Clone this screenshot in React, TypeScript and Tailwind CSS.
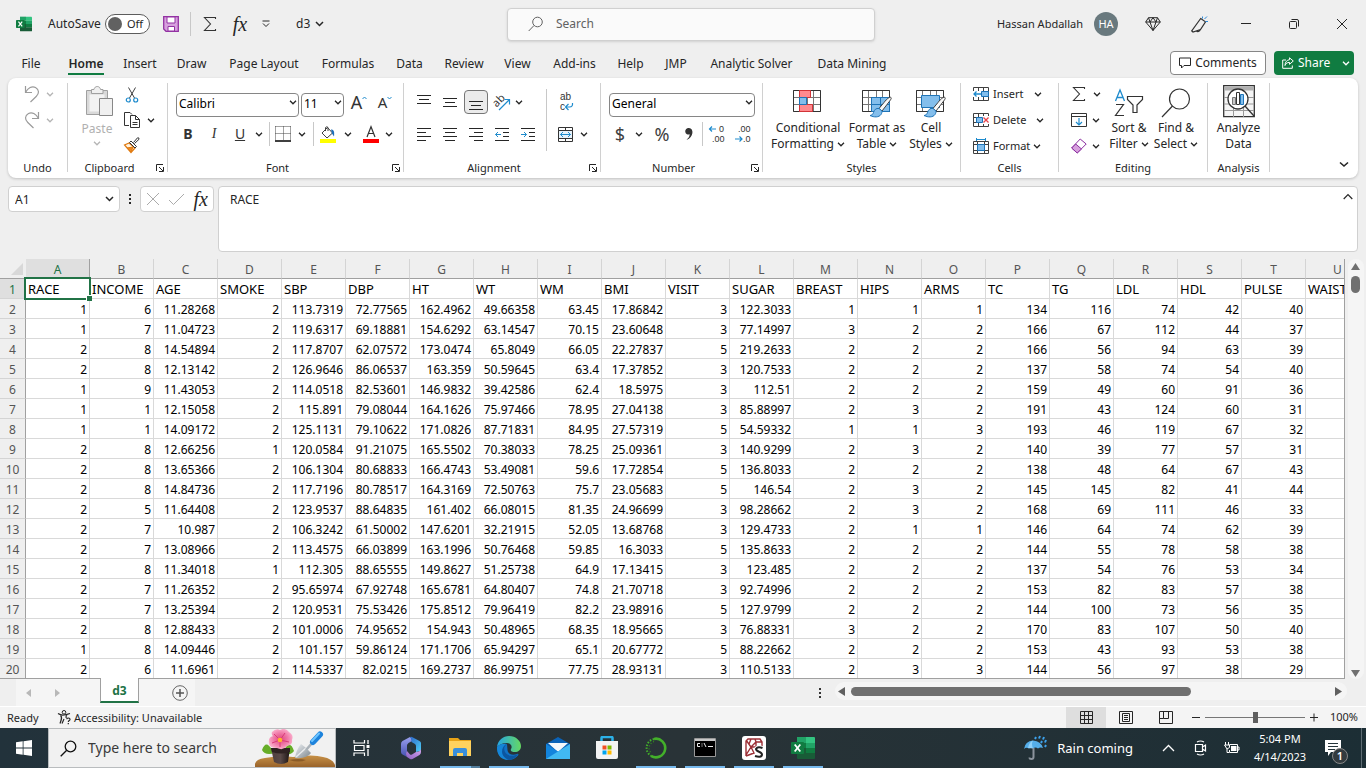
import React from "react";

type Kids = { children?: React.ReactNode };

const TABS = [
  "File", "Home", "Insert", "Draw", "Page Layout", "Formulas", "Data", "Review", "View",
  "Add-ins", "Help", "JMP", "Analytic Solver", "Data Mining",
];
const TAB_WIDTHS = [
  "w-[50px]", "w-[60px]", "w-[48px]", "w-[55px]", "w-[90px]", "w-[78px]", "w-[45px]", "w-[64px]", "w-[43px]",
  "w-[71px]", "w-[41px]", "w-[50px]", "w-[101px]", "w-[100px]",
];

const COLS = "ABCDEFGHIJKLMNOPQRSTU".split("");
const FIELDS = [
  "RACE", "INCOME", "AGE", "SMOKE", "SBP", "DBP", "HT", "WT", "WM", "BMI", "VISIT", "SUGAR",
  "BREAST", "HIPS", "ARMS", "TC", "TG", "LDL", "HDL", "PULSE", "WAIST",
];
const ROWS = `1 6 11.28268 2 113.7319 72.77565 162.4962 49.66358 63.45 17.86842 3 122.3033 1 1 1 134 116 74 42 40
1 7 11.04723 2 119.6317 69.18881 154.6292 63.14547 70.15 23.60648 3 77.14997 3 2 2 166 67 112 44 37
2 8 14.54894 2 117.8707 62.07572 173.0474 65.8049 66.05 22.27837 5 219.2633 2 2 2 166 56 94 63 39
2 8 12.13142 2 126.9646 86.06537 163.359 50.59645 63.4 17.37852 3 120.7533 2 2 2 137 58 74 54 40
1 9 11.43053 2 114.0518 82.53601 146.9832 39.42586 62.4 18.5975 3 112.51 2 2 2 159 49 60 91 36
1 1 12.15058 2 115.891 79.08044 164.1626 75.97466 78.95 27.04138 3 85.88997 2 3 2 191 43 124 60 31
1 1 14.09172 2 125.1131 79.10622 171.0826 87.71831 84.95 27.57319 5 54.59332 1 1 3 193 46 119 67 32
2 8 12.66256 1 120.0584 91.21075 165.5502 70.38033 78.25 25.09361 3 140.9299 2 3 2 140 39 77 57 31
2 8 13.65366 2 106.1304 80.68833 166.4743 53.49081 59.6 17.72854 5 136.8033 2 2 2 138 48 64 67 43
2 8 14.84736 2 117.7196 80.78517 164.3169 72.50763 75.7 23.05683 5 146.54 2 3 2 145 145 82 41 44
2 5 11.64408 2 123.9537 88.64835 161.402 66.08015 81.35 24.96699 3 98.28662 2 3 2 168 69 111 46 33
2 7 10.987 2 106.3242 61.50002 147.6201 32.21915 52.05 13.68768 3 129.4733 2 1 1 146 64 74 62 39
2 7 13.08966 2 113.4575 66.03899 163.1996 50.76468 59.85 16.3033 5 135.8633 2 2 2 144 55 78 58 38
2 8 11.34018 1 112.305 88.65555 149.8627 51.25738 64.9 17.13415 3 123.485 2 2 2 137 54 76 53 34
2 7 11.26352 2 95.65974 67.92748 165.6781 64.80407 74.8 21.70718 3 92.74996 2 2 2 153 82 83 57 38
2 7 13.25394 2 120.9531 75.53426 175.8512 79.96419 82.2 23.98916 5 127.9799 2 2 2 144 100 73 56 35
2 8 12.88433 2 101.0006 74.95652 154.943 50.48965 68.35 18.95665 3 76.88331 3 2 2 170 83 107 50 40
1 8 14.09446 2 101.157 59.86124 171.1706 65.94297 65.1 20.67772 5 88.22662 2 2 2 153 43 93 53 38
2 6 11.6961 2 114.5337 82.0215 169.2737 86.99751 77.75 28.93131 3 110.5133 2 3 3 144 56 97 38 29`
  .split("\n")
  .map((line) => line.split(" "));

function Svg({ w, h, className = "", children }: Kids & { w: number; h: number; className?: string }) {
  return (
    <svg width={w} height={h} viewBox={`0 0 ${w} ${h}`} fill="none" stroke="#404040" strokeWidth="1" className={`block shrink-0 overflow-visible ${className}`} aria-hidden="true">
      {children}
    </svg>
  );
}

function Chev({ color = "#262626", className = "" }: { color?: string; className?: string }) {
  return (
    <Svg w={8} h={5} className={className}>
      <path d="M1 .8 4 3.8 7 .8" stroke={color} strokeWidth="1.3" />
    </Svg>
  );
}

function Btn({ label, w = "w-[26px]", className = "", children }: Kids & { label: string; w?: string; className?: string }) {
  return (
    <button type="button" aria-label={label} className={`flex h-6 shrink-0 items-center justify-center ${w} ${className}`}>
      {children}
    </button>
  );
}

function Drop({ label, w = "w-3", color }: { label: string; w?: string; color?: string }) {
  return (
    <Btn label={label} w={w}>
      <Chev color={color} />
    </Btn>
  );
}

function Group({ name, w, launcher, children }: Kids & { name: string; w: string; launcher?: boolean }) {
  return (
    <>
      <section aria-label={name} className={`flex shrink-0 flex-col ${w}`}>
        <div className="flex h-[82px]">{children}</div>
        <div className={`relative flex h-4 items-center justify-center text-[11px] leading-4 ${launcher ? "pr-4" : ""}`}>
          {name}
          {launcher && (
            <button type="button" aria-label={`${name} settings`} className="absolute right-[3px] top-1">
              <Svg w={8} h={8}>
                <path d="M.5 7V.5H7M3 3l4 4M7.5 3v4.5H3" stroke="#262626" />
              </Svg>
            </button>
          )}
        </div>
      </section>
      <div className="mb-[6px] mt-[5px] w-px shrink-0 bg-[#d0d0d0]" />
    </>
  );
}

function Divider() {
  return <div className="h-6 w-px shrink-0 bg-[#c8c8c8]" />;
}

function Picker({ label, value, w }: { label: string; value: string; w: string }) {
  return (
    <div className={`relative h-6 shrink-0 ${w}`}>
      <select aria-label={label} className="h-6 w-full appearance-none rounded-[4px] border border-[#868686] bg-white pb-[2px] pl-[2px] text-xs text-black">
        <option>{value}</option>
      </select>
      <Chev className="pointer-events-none absolute right-[2px] top-[10px]" />
    </div>
  );
}

function BigButton({ w, lines, drop, icon }: { w: string; lines: [string, string]; drop?: boolean; icon: React.ReactNode }) {
  return (
    <button type="button" className={`flex shrink-0 flex-col items-center text-xs leading-4 ${w}`}>
      <span className="flex h-[42px] items-end justify-center pb-[2px]">{icon}</span>
      <span className="whitespace-nowrap">{lines[0]}</span>
      <span className="flex items-center gap-[3px] whitespace-nowrap">
        {lines[1]}
        {drop && <Chev />}
      </span>
    </button>
  );
}

function Lines({ rows }: { rows: [number, number, number][] }) {
  return (
    <Svg w={14} h={14}>
      {rows.map(([x, y, len]) => (
        <path key={y} d={`M${x} ${y}.5h${len}`} stroke="#262626" />
      ))}
    </Svg>
  );
}

const Sigma = () => (
  <Svg w={14} h={16}>
    <path d="M12.5 3V1.5H1.5L7.5 8l-6 6.500h11V13" stroke="#333" strokeWidth="1.1" />
  </Svg>
);

const UndoIcon = ({ flip = false }) => (
  <Svg w={16} h={18} className={flip ? "-scale-x-100" : ""}>
    <path d="M1.500 1v6.500h6.500M1.500 7.500C4 3 8 .5 11.500 2.500c4 2.300 3.700 6 .7 9L6.500 17" stroke="#9b9b9b" strokeWidth="1.200" />
  </Svg>
);

const TableGrid = ({ children }: Kids) => (
  <Svg w={32} h={29}>
    <path d="M1.500 1.500h27v21h-27zM1.500 8.500h27M1.500 15.500h27M7.500 1.500v21M21.500 1.500v21M15.500 1.500v21" stroke="#767676" />
    <path d="M1.500 1.500h27v21h-27z" stroke="#333" />
    {children}
  </Svg>
);

const Brush = () => (
  <>
    <path d="M30 8.500c-1-1-4 1-7 5l-5 6 3 2.500 5-6.500c3-4 5-6 4-7z" fill="#f8f8f8" stroke="#404040" />
    <path d="M18 19.500c-3-.5-4.500 1-5.500 4-.7 2-2 3-3.500 3 4 2 9 2 11-1 1-1.500 1-2.500 1-3.500z" fill="#83beec" stroke="#1e74b8" />
  </>
);

function DecimalIcon({ top, topX, bottom, bottomX, children }: Kids & { top: string; topX: number; bottom: string; bottomX: number }) {
  return (
    <Svg w={16} h={20}>
      <g fontFamily="Liberation Sans, sans-serif" fontSize="9" fill="#333" stroke="none">
        <text x={topX} y="8">{top}</text>
        <text x={bottomX} y="18">{bottom}</text>
      </g>
      {children}
    </Svg>
  );
}

function ExcelLogo({ size }: { size: number }) {
  return (
    <svg width={size} height={size} viewBox="0 0 24 24" className="block shrink-0" aria-hidden="true">
      <path d="M6 1h9v6H6z" fill="#21a366" />
      <path d="M15 1h8a1 1 0 0 1 1 1v5h-9z" fill="#33c481" />
      <path d="M6 7h9v5H6z" fill="#107c41" />
      <path d="M15 7h9v5h-9z" fill="#21a366" />
      <path d="M6 12h9v11H7a1 1 0 0 1-1-1z" fill="#185c37" />
      <path d="M15 12h9v5h-9z" fill="#107c41" />
      <path d="M15 17h9v5a1 1 0 0 1-1 1h-8z" fill="#185c37" />
      <rect x="0" y="6" width="13" height="12" rx="1" fill="#107c41" />
      <path d="m3.700 8.500 5.600 7M9.300 8.500l-5.600 7" stroke="#fff" strokeWidth="1.800" />
    </svg>
  );
}

function TitleBar() {
  return (
    <header className="flex h-12 shrink-0 items-center">
      <div className="flex flex-1 items-center pl-4">
        <ExcelLogo size={16} />
        <span id="autosave" className="ml-4 w-[57px] text-xs">AutoSave</span>
        <button type="button" role="switch" aria-checked="false" aria-labelledby="autosave" className="flex h-5 w-[45px] items-center gap-[5px] rounded-full border border-[#5c5c5c] bg-white pl-[2px] text-[11px]">
          <span className="size-[14px] rounded-full bg-[#616161]" />
          Off
        </button>
        <button type="button" aria-label="Save" className="ml-[13px]">
          <Svg w={16} h={16}>
            <path d="M.7.700h14.600v14.600H3L.700 13z" fill="#d7a0de" stroke="#9332a3" strokeWidth="1.300" />
            <path d="M4 1h8v6H4zM5 10.500h6.500V15H5z" fill="#fff" stroke="#9332a3" />
          </Svg>
        </button>
        <div className="ml-[11px] h-6 w-px bg-[#c8c8c8]" />
        <button type="button" aria-label="AutoSum" className="ml-3"><Sigma /></button>
        <button type="button" aria-label="Insert function" className="ml-[11px] w-6 font-['Liberation_Serif',serif] text-xl italic leading-6">fx</button>
        <button type="button" aria-label="Customize toolbar" className="ml-[10px]">
          <Svg w={8} h={8}><path d="M.5 1h7M1 3.500l3 3 3-3" stroke="#262626" /></Svg>
        </button>
        <button type="button" className="ml-[26px] flex items-center gap-[5px] text-xs">
          d3
          <Svg w={9} h={6}><path d="m1 1 3.500 3.500L8 1" stroke="#262626" strokeWidth="1.500" /></Svg>
        </button>
      </div>
      <label className="flex h-[33px] w-[368px] items-center rounded border border-[#d0d0d0] bg-[#fafafa] pl-5 shadow-sm">
        <Svg w={16} h={16}><circle cx="9.500" cy="6" r="4.800" stroke="#616161" /><path d="M6 9.500.700 15" stroke="#616161" /></Svg>
        <input aria-label="Search" placeholder="Search" className="ml-3 w-full bg-transparent text-xs outline-none placeholder:text-[#616161]" />
      </label>
      <div className="flex flex-1 items-center justify-end">
        <span className="text-[11px]">Hassan Abdallah</span>
        <span className="ml-[11px] flex size-6 items-center justify-center rounded-full bg-[#69797e] text-[11px] text-white">HA</span>
        <Btn label="Premium" w="w-[46px]" className="ml-3">
          <Svg w={16} h={14}>
            <path d="M3.500.700h9L15.300 5 8 13.500.700 5zM.700 5h14.600M3.500.700 5 5l3 8.500L11 5 12.500.700M5 5l3-4.300L11 5" stroke="#262626" />
          </Svg>
        </Btn>
        <Btn label="What's new" w="w-[46px]">
          <Svg w={17} h={17}>
            <path d="m9.700 2.500 4.800 3.300-5 7.700-7.500 2.500-1.300-1.200zM5.500 14.700c.7 1.500 3.500 1.300 4-1.700" stroke="#333" strokeWidth="1.200" />
            <path d="M11.500.500v2M13.500 3 16 .500M14.500 5.500H17" stroke="#2b88d8" />
          </Svg>
        </Btn>
        <Btn label="Minimize" w="w-12"><Svg w={10} h={10}><path d="M0 4.500h10" stroke="#262626" /></Svg></Btn>
        <Btn label="Restore" w="w-12">
          <Svg w={10} h={10}><rect x=".5" y="2.500" width="7" height="7" rx="1" stroke="#262626" /><path d="M2.500.500H8Q9.500.500 9.500 2v5.500" stroke="#262626" /></Svg>
        </Btn>
        <Btn label="Close" w="w-12"><Svg w={12} h={12}><path d="m1 1 10 10M11 1 1 11" stroke="#262626" /></Svg></Btn>
      </div>
    </header>
  );
}

function TabRow() {
  return (
    <nav className="flex h-[30px] shrink-0 items-center pl-[6px] pr-3">
      {TABS.map((t, i) => (
        <button key={t} type="button" className={`flex h-6 shrink-0 items-center justify-center whitespace-nowrap text-xs ${t === "Home" ? "" : "pt-[2px]"} ${TAB_WIDTHS[i]}`}>
          {t === "Home" ? (
            <span className="flex h-6 items-center border-b-2 border-[#107c41] pt-1 font-semibold">{t}</span>
          ) : t}
        </button>
      ))}
      <button type="button" className="ml-auto flex h-6 w-24 items-center justify-center gap-1 rounded border border-[#868686] bg-white text-xs">
        <Svg w={12} h={12}><path d="M.5 1h11v7.500H5L2.500 11V8.500H.500z" stroke="#262626" /></Svg>
        Comments
      </button>
      <button type="button" className="ml-2 flex h-6 w-20 items-center rounded bg-[#107c41] pl-2 text-xs text-white">
        <Svg w={12} h={12}><path d="M4 3H.700v8.300h9.600V8.500M7.500.800 11.300 4 7.500 7.300V5.400C5 5.400 4 6.500 3 8.500 3 5 5 3 7.500 2.700z" stroke="#fff" /></Svg>
        <span className="ml-1">Share</span>
        <Chev color="#fff" className="ml-auto mr-1" />
      </button>
    </nav>
  );
}

function CellsRow({ label, gap, icon }: { label: string; gap: string; icon: React.ReactNode }) {
  return (
    <button type="button" className={`flex h-[26px] items-center text-[11px] ${gap}`}>
      <span className="flex items-center gap-1">{icon}{label}</span>
      <Chev />
    </button>
  );
}

function Ribbon() {
  return (
    <div className="mx-2 flex h-[100px] shrink-0 overflow-hidden rounded-lg bg-white shadow-[0_1px_3px_rgba(0,0,0,0.2)]">
      <Group name="Undo" w="w-[59px]">
        <div className="flex flex-col pl-4 pt-[3px]">
          {["Undo", "Redo"].map((n) => (
            <div key={n} className="flex h-[26px] items-center gap-1">
              <button type="button" aria-label={n}><UndoIcon flip={n === "Redo"} /></button>
              <Drop label={`${n} options`} color="#b5b5b5" />
            </div>
          ))}
        </div>
      </Group>
      <Group name="Clipboard" w="w-[99px]" launcher>
        <button type="button" className="ml-[9px] mt-2 flex w-10 flex-col items-center text-xs leading-4 text-[#b0b0b0]">
          <Svg w={30} h={32} className="ml-1">
            <path d="M2.500 4.500h21v24h-21z" fill="#d9d9d9" stroke="#a0a0a0" />
            <path d="M5.500 8.500h15v17h-15z" fill="#f3f3f3" stroke="none" />
            <path d="M7.500 7.500v-4H10c.5-4 6-4 6.500 0h2.500v4z" fill="#f0f0f0" stroke="#a0a0a0" />
            <path d="M15.500 12.500h13v17h-13z" fill="#f0f0f0" stroke="#888" />
          </Svg>
          <span className="mt-[3px]">Paste</span>
          <Chev color="#b5b5b5" className="mt-1" />
        </button>
        <div className="flex flex-col gap-px pl-[2px] pt-[5px]">
          <Btn label="Cut">
            <Svg w={14} h={16}>
              <path d="M3.500.500 9.500 11M10.500.500 4.500 11" stroke="#404040" />
              <circle cx="3.300" cy="13" r="2" stroke="#1e8bcd" strokeWidth="1.200" /><circle cx="10.700" cy="13" r="2" stroke="#1e8bcd" strokeWidth="1.200" />
            </Svg>
          </Btn>
          <div className="flex">
            <Btn label="Copy">
              <Svg w={16} h={16}>
                <path d="M5 13.500H.500V.500H6l2 2" stroke="#333" />
                <path d="M6.500 3.500h5l4 4v8h-9zM11.500 3.500v4h4M8.500 10.500h5M8.500 12.500h5" stroke="#333" />
              </Svg>
            </Btn>
            <Drop label="Copy options" />
          </div>
          <Btn label="Format painter">
            <Svg w={16} h={16}>
              <path d="M5 6 .500 8 7 15.500l4-4.500z" fill="#fff3e0" stroke="#e07a10" strokeWidth="1.200" />
              <path d="M3 11l6-1-2 5z" fill="#ee8a22" stroke="#e07a10" />
              <path d="m9.500 5.500 4-4.700q1.800-.5 1.500 1.500l-4.500 4.200" fill="#fff" stroke="#333" />
              <path d="m7 4 5.500 5.500-1.500 1.500-5.500-5.500z" fill="#fff" stroke="#333" />
            </Svg>
          </Btn>
        </div>
      </Group>
      <Group name="Font" w="w-[235px]" launcher>
        <div className="flex flex-col gap-2 pt-3">
          <div className="flex pl-2">
            <Picker label="Font" value="Calibri" w="w-[123px]" />
            <Picker label="Font size" value="11" w="ml-[2px] w-[43px]" />
            <Btn label="Grow font" className="ml-[2px]">
              <span className="text-lg leading-6 text-[#333]">A</span>
              <Svg w={5} h={4} className="mb-[9px]"><path d="m.5 3 2-2 2 2" stroke="#1e8bcd" /></Svg>
            </Btn>
            <Btn label="Shrink font">
              <span className="text-[15px] leading-6 text-[#333]">A</span>
              <Svg w={5} h={4} className="mb-[9px]"><path d="m.5 1 2 2 2-2" stroke="#1e8bcd" /></Svg>
            </Btn>
          </div>
          <div className="flex pl-[7px] text-sm text-[#333]">
            <Btn label="Bold"><b>B</b></Btn>
            <Btn label="Italic"><i className="font-['Liberation_Serif',serif]">I</i></Btn>
            <Btn label="Underline"><u>U</u></Btn>
            <Drop label="Underline options" />
            <div className="w-[4px]" />
            <Divider />
            <Btn label="Borders">
              <Svg w={16} h={16}>
                <path d="M.5.500h15M.500.500v13M15.500.500v13M8.500.500v13M.500 7.500h15" stroke="#444" strokeDasharray="1 1" />
                <path d="M0 15h16" stroke="#000" strokeWidth="1.500" />
              </Svg>
            </Btn>
            <Drop label="Border options" />
            <div className="w-[5px]" />
            <Divider />
            <Btn label="Fill color" w="w-7">
              <Svg w={16} h={17}>
                <path d="m7.500 1.500 5 5.500-5.500 5L2 7z" stroke="#404040" fill="#fff" /><path d="M5.500 5V1.500q1.500-1.500 2.500 0V5" stroke="#404040" />
                <path d="M11 3.500c3 0 3.500 2 3 7l-2-3z" fill="#1e6fb8" stroke="none" />
                <path d="M0 13h16v4H0z" fill="#ff0" stroke="none" />
              </Svg>
            </Btn>
            <Drop label="Fill options" />
            <Btn label="Font color" w="w-[33px]">
              <Svg w={16} h={17}>
                <path d="m4 11 4-10.300L12 11M5.300 7.500h5.400" stroke="#333" strokeWidth="1.200" /><path d="M0 13h16v4H0z" fill="red" stroke="none" />
              </Svg>
            </Btn>
            <Drop label="Font color options" w="w-1" />
          </div>
        </div>
      </Group>
      <Group name="Alignment" w="w-[196px]" launcher>
        <div className="flex flex-col gap-2 pl-[7px] pt-3">
          <div className="flex">
            <Btn label="Top align"><Lines rows={[[0, 0, 14], [2, 4, 10], [0, 8, 14]]} /></Btn>
            <Btn label="Middle align"><Lines rows={[[0, 3, 14], [2, 7, 10], [0, 11, 14]]} /></Btn>
            <Btn label="Bottom align">
              <span className="flex size-6 items-center justify-center rounded border border-[#767676] bg-[#ebebeb]"><Lines rows={[[0, 6, 14], [2, 10, 10], [0, 14, 14]]} /></span>
            </Btn>
            <Btn label="Orientation">
              <Svg w={18} h={18}>
                <text x="0" y="12" transform="rotate(-45 5 9)" fontSize="11" fill="#333" stroke="none">ab</text>
                <path d="m6 17 10-10M11.500 6.500H16.500V11.500" stroke="#1e8bcd" strokeWidth="1.200" />
              </Svg>
            </Btn>
            <Drop label="Orientation options" w="w-2" />
          </div>
          <div className="flex">
            <Btn label="Align left"><Lines rows={[[0, 1, 14], [0, 5, 9], [0, 9, 14], [0, 13, 9]]} /></Btn>
            <Btn label="Center"><Lines rows={[[0, 1, 14], [2, 5, 10], [0, 9, 14], [2, 13, 10]]} /></Btn>
            <Btn label="Align right"><Lines rows={[[0, 1, 14], [5, 5, 9], [0, 9, 14], [5, 13, 9]]} /></Btn>
            <Btn label="Decrease indent">
              <Svg w={14} h={14}><path d="M0 1.500h14M8 5.500h6M8 9.500h6M0 13.500h14" stroke="#262626" /><path d="M6 7.500H.500M3 5 .500 7.500 3 10" stroke="#1e8bcd" /></Svg>
            </Btn>
            <Btn label="Increase indent">
              <Svg w={14} h={14}><path d="M0 1.500h14M8 5.500h6M8 9.500h6M0 13.500h14" stroke="#262626" /><path d="M0 7.500h5.500M3 5l2.500 2.500L3 10" stroke="#1e8bcd" /></Svg>
            </Btn>
          </div>
        </div>
        <div className="ml-[5px] mt-[11px] h-[62px] w-px bg-[#c8c8c8]" />
        <div className="flex flex-col gap-2 pl-[6px] pt-3">
          <Btn label="Wrap text">
            <Svg w={14} h={20}>
              <g fontFamily="Liberation Sans, sans-serif" fontSize="10" fill="#333" stroke="none">
                <text x="1" y="8">ab</text>
                <text x="1" y="18">c</text>
              </g>
              <path d="M13.500 11q.5 4-3 4H7M9.500 12 6.500 15l3 3" stroke="#1e8bcd" strokeWidth="1.200" />
            </Svg>
          </Btn>
          <div className="flex">
            <Btn label="Merge and center">
              <Svg w={16} h={15}>
                <path d="M.5.500h14v14H.500zM7.500.500V3M7.500 12v3M.500 3.500h14M.500 11.500h14" stroke="#333" />
                <path d="M.5 3.500h14v8H.500z" fill="#e6f2fb" stroke="#333" /><path d="M2.500 7.500h10M5 5 2.500 7.500 5 10M10 5l2.500 2.500L10 10" stroke="#1e8bcd" />
              </Svg>
            </Btn>
            <Drop label="Merge options" w="w-[10px]" />
          </div>
        </div>
      </Group>
      <Group name="Number" w="w-[161px]" launcher>
        <div className="flex flex-col gap-2 pt-3">
          <div className="flex pl-2"><Picker label="Number format" value="General" w="w-[146px]" /></div>
          <div className="flex pl-[6px] text-lg leading-6 text-[#404040]">
            <Btn label="Accounting format">$</Btn>
            <Drop label="Accounting options" />
            <Btn label="Percent style" w="w-[34px]">%</Btn>
            <Btn label="Comma style" w="w-5">
              <Svg w={8} h={14}><path d="M4 1a3.300 3.300 0 1 0 .8 6.300Q4.800 10.500 1.500 13C9 10.500 9 1 4 1z" fill="#333" stroke="none" /></Svg>
            </Btn>
            <div className="w-[3px]" />
            <Divider />
            <Btn label="Increase decimal" className="ml-px">
              <DecimalIcon top="0" topX={10} bottom=".00" bottomX={3}>
                <path d="M7 5H.500M3 2.500.500 5 3 7.500" stroke="#1e8bcd" strokeWidth="1.200" />
              </DecimalIcon>
            </Btn>
            <Btn label="Decrease decimal">
              <DecimalIcon top=".00" topX={3} bottom=".0" bottomX={8}>
                <path d="M0 15h7M4.500 12.500 7 15l-2.500 2.500" stroke="#1e8bcd" strokeWidth="1.200" />
              </DecimalIcon>
            </Btn>
          </div>
        </div>
      </Group>
      <Group name="Styles" w="w-[197px]">
        <BigButton w="ml-[6px] w-[78px]" lines={["Conditional", "Formatting"]} drop icon={
          <TableGrid>
            <path d="M7.500 1.500h11v7h-11zM7.500 15.500h13v7h-13z" fill="#ff8a8f" stroke="#d13438" />
            <path d="M7.500 8.500h7v7h-7z" fill="#83beec" stroke="#1e74b8" />
          </TableGrid>} />
        <BigButton w="w-[60px]" lines={["Format as", "Table"]} drop icon={
          <TableGrid>
            <path d="M10.500 8.500h18v14h-18z" fill="#83beec" /><path d="M10.500 8.500h18M10.500 15.500h18M19.500 8.500v14M10.500 8.500v14h18v-14" stroke="#1e74b8" />
            <Brush />
          </TableGrid>} />
        <BigButton w="w-12" lines={["Cell", "Styles"]} drop icon={
          <TableGrid>
            <path d="M6.500 6.500h18v12h-18z" fill="#83beec" stroke="#1e74b8" />
            <Brush />
          </TableGrid>} />
      </Group>
      <Group name="Cells" w="w-[97px]">
        <div className="flex flex-col items-start pl-3 pt-[3px]">
          <CellsRow label="Insert" gap="gap-[10px]" icon={
            <Svg w={16} h={14}><path d="M.5.500h15v13H.500zM.500 4.500h15M.500 9.500h15M5.500.500v13M10.500.500v13" stroke="#404040" /><path d="M0 4h9v6H0z" fill="#fff" stroke="none" /><path d="M8.500 4.500h7v5h-7z" fill="#83beec" stroke="#1e74b8" /><path d="M8 7H1M3.500 4.500 1 7l2.500 2.500" stroke="#1e8bcd" strokeWidth="1.300" /></Svg>} />
          <CellsRow label="Delete" gap="gap-[10px]" icon={
            <Svg w={16} h={14}><path d="M.5.500h15v13H.500zM.500 4.500h15M.500 9.500h15M5.500.500v13M10.500.500v13" stroke="#404040" /><path d="M9 3h7v8H9z" fill="#fff" stroke="none" /><path d="M3.500 4.500h6v5h-6z" fill="#83beec" stroke="#1e74b8" /><path d="m10.500 4.500 5 5M15.500 4.500l-5 5" stroke="#e8434a" strokeWidth="1.300" /></Svg>} />
          <CellsRow label="Format" gap="gap-[3px]" icon={
            <Svg w={16} h={16}><path d="M.5 3.500h15v12H.500zM.500 6.500h15M.500 12.500h15M4.500 3.500v12M11.500 3.500v12" stroke="#404040" /><path d="M4.500 6.500h7v6h-7z" fill="#83beec" stroke="#1e74b8" /><path d="M3.500 0v3M12.500 0v3M3.500 1.500h9" stroke="#1e8bcd" /></Svg>} />
        </div>
      </Group>
      <Group name="Editing" w="w-[148px]">
        <div className="flex w-[45px] flex-col gap-[2px] pl-[7px] pt-1">
          <div className="flex"><Btn label="AutoSum"><Sigma /></Btn><Drop label="AutoSum options" w="w-[10px]" /></div>
          <div className="flex">
            <Btn label="Fill"><Svg w={16} h={15}><path d="M.5.500h15v13H.500zM.500 3.500h15" stroke="#333" /><path d="M8 5v7M5 9l3 3 3-3" stroke="#1e8bcd" strokeWidth="1.200" /></Svg></Btn>
            <Drop label="Fill options" w="w-2" />
          </div>
          <div className="flex">
            <Btn label="Clear"><Svg w={16} h={16}><path d="m.7 10 8.500-9 6 5-9 9z" fill="#fff" stroke="#8b2fa0" /><path d="m.7 10 4-4 5.800 5-4.300 4z" fill="#d7a0de" stroke="#8b2fa0" /></Svg></Btn>
            <Drop label="Clear options" w="w-2" />
          </div>
        </div>
        <BigButton w="w-[50px]" lines={["Sort &", "Filter"]} drop icon={
          <Svg w={30} h={30}>
            <path d="m1.500 13 4.500-11 4.500 11M3 9.500h6" stroke="#1e8bcd" strokeWidth="1.300" />
            <path d="M2 16.500h7.500L1.500 27.500h8.500" stroke="#333" strokeWidth="1.200" />
            <path d="M13.500 8.500h15v3L23 17v7.500h-4V17l-5.500-5.500z" stroke="#333" strokeWidth="1.200" />
          </Svg>} />
        <BigButton w="w-11" lines={["Find &", "Select"]} drop icon={
          <Svg w={30} h={32}><circle cx="18.500" cy="13" r="10" stroke="#333" strokeWidth="1.200" /><path d="M11.500 20 1 31" stroke="#333" strokeWidth="1.200" /></Svg>} />
      </Group>
      <Group name="Analysis" w="w-[61px]">
        <BigButton w="w-[61px]" lines={["Analyze", "Data"]} icon={
          <Svg w={32} h={33}>
            <path d="M.7.700h30.600v31H.700z" stroke="#333" strokeWidth="1.300" fill="#f5f5f5" /><path d="M1.500 1.500h29v4h-29z" fill="#b0b0b0" stroke="none" />
            <path d="M1 12.500h30M1 19h30M1 25.500h30M10.500 5v27M20.500 5v27" stroke="#999" />
            <circle cx="15" cy="14" r="10" fill="#fff" stroke="#333" strokeWidth="1.300" /><path d="m22 21 9 10" stroke="#333" strokeWidth="1.300" />
            <path d="M9.500 12.500h3v7h-3z" fill="#c8c8c8" stroke="#777" /><path d="M13.500 7.500h3v12h-3z" fill="#fff" stroke="#333" /><path d="M17.500 9.500h3v10h-3z" fill="#83beec" stroke="#1e74b8" />
          </Svg>} />
      </Group>
      <button type="button" aria-label="Collapse ribbon" className="mb-[10px] ml-auto mr-[9px] self-end">
        <Svg w={10} h={7}><path d="m1 1.500 4 3.500 4-3.500" stroke="#262626" strokeWidth="1.600" /></Svg>
      </button>
    </div>
  );
}

function FormulaBar() {
  return (
    <div className="flex h-[81px] shrink-0 items-start px-2 pt-2">
      <div className="flex h-[26px] w-28 items-center rounded border border-[#d0d0d0] bg-white pr-[5px]">
        <input aria-label="Name box" defaultValue="A1" className="w-full bg-transparent pl-[6px] pt-[2px] text-xs outline-none" />
        <Svg w={9} h={6}><path d="m1 1 3.500 3.500L8 1" stroke="#262626" strokeWidth="1.500" /></Svg>
      </div>
      <Svg w={20} h={26}><path d="M10 8v2M10 12v2M10 16v2" stroke="#262626" strokeWidth="2" /></Svg>
      <div className="mr-1 flex h-[26px] w-[74px] items-center justify-between rounded border border-[#d0d0d0] bg-white px-[5px]">
        <button type="button" aria-label="Cancel"><Svg w={14} h={14}><path d="m1 1 12 12M13 1 1 13" stroke="#ababab" /></Svg></button>
        <button type="button" aria-label="Enter"><Svg w={17} h={14}><path d="m1 8 4.500 4.500L16 2" stroke="#ababab" /></Svg></button>
        <button type="button" aria-label="Insert function" className="pb-px font-['Liberation_Serif',serif] text-xl italic leading-5">fx</button>
      </div>
      <div className="flex h-[66px] flex-1 items-start rounded border border-[#d0d0d0] bg-white">
        <textarea aria-label="Formula" defaultValue="RACE" className="h-full flex-1 resize-none bg-transparent pl-[11px] pt-[5px] text-xs outline-none" />
        <button type="button" aria-label="Collapse formula bar" className="mr-1 mt-[6px]"><Svg w={10} h={7}><path d="m.7 6 4.300-4.300L9.300 6" stroke="#262626" strokeWidth="1.200" /></Svg></button>
      </div>
    </div>
  );
}

function Sheet() {
  return (
    <main className="flex min-h-0 flex-1">
      <div className="min-w-0 flex-1 overflow-hidden border-b border-r border-[#a0a0a0]">
        <table className="w-[1370px] table-fixed border-separate border-spacing-0 text-xs leading-[17px]">
          <colgroup>
            <col className="w-[26px]" />
            {COLS.map((c) => <col key={c} className="w-16" />)}
          </colgroup>
          <thead>
            <tr className="h-5 text-[#555]">
              <th className="border-b border-[#a0a0a0] bg-[#efefef] p-0">
                <svg width="12" height="12" viewBox="0 0 12 12" className="ml-auto mr-[3px] block" aria-label="Select all"><path d="M12 0v12H0z" fill="#d8d8d8" /></svg>
              </th>
              {COLS.map((c) => (
                <th key={c} scope="col" className={`border-b border-r border-b-[#a0a0a0] p-0 pt-[2px] font-normal ${c === "A" ? "border-r-[#a0a0a0] bg-[#dfdfdf] text-[#217346]" : "border-r-[#d4d4d4] bg-[#efefef]"}`}>{c}</th>
              ))}
            </tr>
          </thead>
          <tbody>
            <tr className="h-5 bg-white text-[13px]">
              <th scope="row" className="border-b border-r border-b-[#d4d4d4] border-r-[#a0a0a0] bg-[#dfdfdf] p-0 pt-[2px] text-xs font-normal leading-[17px] text-[#217346]">1</th>
              {FIELDS.map((f, i) => (
                <td key={f} className="relative whitespace-nowrap border-b border-r border-[#d9d9d9] p-0 pl-[2px] pt-[2px] text-black">
                  {f}
                  {i === 0 && (
                    <span className="absolute -inset-[2px] z-10 border-2 border-[#217346]">
                      <span className="absolute -bottom-[3px] -right-[3px] size-[6px] border-l border-t border-white bg-[#217346]" />
                    </span>
                  )}
                </td>
              ))}
            </tr>
            {ROWS.map((row, r) => (
              <tr key={r} className="h-5 bg-white">
                <th scope="row" className="border-b border-r border-b-[#d4d4d4] border-r-[#a0a0a0] bg-[#efefef] p-0 pt-[2px] font-normal text-[#555]">{r + 2}</th>
                {COLS.map((c, i) => (
                  <td key={c} className="border-b border-r border-[#d9d9d9] p-0 pr-[2px] pt-[2px] text-right text-black">{row[i] ?? ""}</td>
                ))}
              </tr>
            ))}
          </tbody>
        </table>
      </div>
      <div className="flex w-[21px] flex-col items-center">
        <div className="flex w-4 flex-1 flex-col items-center rounded-full bg-[#f5f5f5] pb-[2px] pt-1">
          <Svg w={9} h={7}><path d="M4.500 0 9 7H0z" fill="#707070" stroke="none" /></Svg>
          <div className="mt-[6px] h-[17px] w-[9px] rounded-full bg-[#707070]" />
          <Svg w={9} h={7} className="mt-auto"><path d="M4.500 7 9 0H0z" fill="#707070" stroke="none" /></Svg>
        </div>
      </div>
    </main>
  );
}

function SheetTabs() {
  return (
    <div className="flex h-[28px] shrink-0 items-start border-b border-white">
      <div className="ml-4 flex h-[27px] w-[179px] items-center bg-[#f5f5f5]">
        <button type="button" aria-label="Previous sheet" className="ml-[10px]"><Svg w={5} h={8}><path d="M5 0v8L0 4z" fill="#b8b8b8" stroke="none" /></Svg></button>
        <button type="button" aria-label="Next sheet" className="ml-6"><Svg w={5} h={8}><path d="M0 0v8l5-4z" fill="#b8b8b8" stroke="none" /></Svg></button>
        <button type="button" className="-mt-px ml-10 flex h-[25px] w-[39px] items-center justify-center self-start border-x border-b-2 border-x-[#a0a0a0] border-b-[#217346] bg-white pt-[2px] text-xs font-bold text-[#217346]">d3</button>
        <button type="button" aria-label="New sheet" className="ml-[33px]"><Svg w={16} h={16}><circle cx="8" cy="8" r="7.300" stroke="#666" /><path d="M8 4v8M4 8h8" stroke="#555" strokeWidth="1.500" /></Svg></button>
      </div>
      <Svg w={8} h={27} className="ml-auto"><path d="M4 9v2M4 13v2M4 17v2" stroke="#333" strokeWidth="2" /></Svg>
      <div className="ml-[11px] mr-[19px] mt-[3px] flex h-[18px] w-[512px] items-center rounded-full bg-[#f5f5f5] px-[3px]">
        <Svg w={7} h={9}><path d="M7 0v9L0 4.500z" fill="#606060" stroke="none" /></Svg>
        <div className="ml-[6px] h-[9px] w-[340px] rounded-full bg-[#707070]" />
        <Svg w={7} h={9} className="ml-auto mr-[2px]"><path d="M0 0v9l7-4.500z" fill="#606060" stroke="none" /></Svg>
      </div>
    </div>
  );
}

function StatusBar() {
  return (
    <footer className="flex h-[21px] shrink-0 items-center bg-[#f4f4f4] pl-[7px] pr-2 text-[11px]">
      <span className="w-[50px] pt-px">Ready</span>
      <Svg w={15} h={15}>
        <path d="M1 3.500q3 2 6 1.500t6-1.500M3.500 5.500c2 1.500 1 4-.5 8M10 5c-1.500 1-1 2-.8 3M5 13.500 7 9" stroke="#262626" strokeWidth="1.200" />
        <circle cx="7" cy="2.300" r="1.800" stroke="#262626" />
        <path d="M9.500 9q2-2 3.500 0c.5 1.500-1.700 1.500-1.700 3M11.300 13v1.300" stroke="#262626" strokeWidth="1.200" />
      </Svg>
      <span className="ml-[2px] pt-px">Accessibility: Unavailable</span>
      <div className="ml-auto flex">
        <button type="button" aria-label="Normal view" className="flex h-[21px] w-10 items-center justify-center bg-[#dedede]">
          <Svg w={13} h={13}><path d="M.5.500h12v12H.500zM.500 4.500h12M.500 8.500h12M4.500.500v12M8.500.500v12" stroke="#262626" /></Svg>
        </button>
        <button type="button" aria-label="Page layout view" className="flex w-10 items-center justify-center">
          <Svg w={14} h={13}><path d="M.5.500h13v12H.500zM3.500 2.500h7v8h-7zM5 4.500h4M5 6.500h4M5 8.500h4" stroke="#262626" /></Svg>
        </button>
        <button type="button" aria-label="Page break preview" className="flex w-10 items-center justify-center">
          <Svg w={14} h={13}><path d="M.5.500h13v12H.500zM4.500.500v7h5v-7M.500 7.500h4" stroke="#262626" /></Svg>
        </button>
      </div>
      <button type="button" aria-label="Zoom out" className="ml-[6px]"><Svg w={8} h={9}><path d="M0 4.500h8" stroke="#262626" /></Svg></button>
      <input
        type="range" aria-label="Zoom" min="10" max="190" defaultValue="100"
        className="mx-[5px] h-3 w-[100px] appearance-none bg-transparent [&::-webkit-slider-runnable-track]:h-px [&::-webkit-slider-runnable-track]:bg-[#767676] [&::-webkit-slider-thumb]:-mt-[5px] [&::-webkit-slider-thumb]:h-[11px] [&::-webkit-slider-thumb]:w-[5px] [&::-webkit-slider-thumb]:appearance-none [&::-webkit-slider-thumb]:bg-[#5f5f5f]"
      />
      <button type="button" aria-label="Zoom in"><Svg w={8} h={9}><path d="M0 4.500h8M4 .5v8" stroke="#262626" /></Svg></button>
      <span className="w-10 text-right text-[11px]">100%</span>
    </footer>
  );
}

function TaskIcon({ label, open, stacked, children }: Kids & { label: string; open?: boolean; stacked?: boolean }) {
  return (
    <button type="button" aria-label={label} className="flex h-10 w-[49px] shrink-0 flex-col items-center">
      <span className="flex h-[38px] items-center justify-center pt-px">{children}</span>
      {open && (
        <span className="flex h-[2px] w-10 bg-[#76b9ed]">
          {stacked && <span className="ml-auto h-[2px] w-[9px] bg-[#527d9c]" />}
        </span>
      )}
    </button>
  );
}

function Flower() {
  return (
    <svg width="80" height="38" viewBox="0 0 80 38" className="block shrink-0" aria-hidden="true">
      <defs>
        <linearGradient id="soil" x1="0" y1="0" x2="0" y2="1"><stop offset="0" stopColor="#c79147" /><stop offset="1" stopColor="#99632a" /></linearGradient>
        <linearGradient id="pot" x1="0" y1="0" x2="1" y2="0"><stop offset="0" stopColor="#4d3d3d" /><stop offset=".5" stopColor="#5a4a48" /><stop offset="1" stopColor="#1c1413" /></linearGradient>
        <linearGradient id="metal" x1="0" y1="0" x2="1" y2="1"><stop offset="0" stopColor="#eef1f4" /><stop offset="1" stopColor="#7c868e" /></linearGradient>
        <radialGradient id="petal"><stop offset="0" stopColor="#e0467f" /><stop offset=".6" stopColor="#f07aa8" /><stop offset="1" stopColor="#f9a9c8" /></radialGradient>
      </defs>
      <path d="M0 38v-3q1-5 10-6 15-3 28-1 20-3 30 0 10 2 12 8v2z" fill="url(#soil)" />
      <path d="M34 31q10-2 17 0-7 3-17 0z" fill="#6e451b" opacity=".6" />
      <path d="M17 21Q11 10 7 21q3 6 13 3zM29 21q6-11 10 1-3 5-11 2z" fill="#67ad28" />
      <path d="M16 19h19l-2 14q-7 4-14 0z" fill="url(#pot)" />
      <path d="M16 19h19v4q-9 3-18 0z" fill="#2f2222" />
      <path d="M25 11Q15 8 17 3q4-4 8-2 5-3 9 2 5 3 3 8 1 5-5 6-4 5-10 2-8 0-8-5-1-6 4-7z" fill="url(#petal)" />
      <path d="m25 11-6-6M25 11l5-7M25 11l-8 3M25 11l9 2M25 11v7" stroke="#d83b78" />
      <circle cx="25" cy="11" r="2.300" fill="#ffb52e" />
      <path d="M46 15q6 4 10 9-4 6-16 5 1-8 6-14z" fill="url(#metal)" />
      <path d="m41 28 10-9" stroke="#fff" strokeWidth="1.500" opacity=".7" />
      <path d="m51 21 7-8" stroke="#aab2b9" strokeWidth="2.500" />
      <path d="m58 13 7-7.500" stroke="#1d83dc" strokeWidth="6" strokeLinecap="round" />
      <path d="m57 12 7-7.500" stroke="#6cc4ff" strokeWidth="2" strokeLinecap="round" />
    </svg>
  );
}

function Taskbar() {
  return (
    <div className="flex h-10 shrink-0 items-center bg-gradient-to-r from-[#22323b] via-[#293337] to-[#1c2e35] text-white">
      <button type="button" aria-label="Start" className="flex h-10 w-12 shrink-0 items-center justify-center">
        <svg width="16" height="16" viewBox="0 0 16 16" aria-hidden="true"><path d="M0 2.300 6.700 1.300v6.300H0zM7.500 1.200 16 0v7.600H7.500zM0 8.400h6.700v6.300L0 13.700zM7.500 8.400H16V16l-8.500-1.200z" fill="#fff" /></svg>
      </button>
      <label className="flex h-10 w-72 shrink-0 items-center overflow-hidden border border-[#b9bcbe] bg-[#f1f1f1] pl-[11px] text-black">
        <Svg w={17} h={17}><circle cx="10.500" cy="6.500" r="5.300" stroke="#111" strokeWidth="1.300" /><path d="M6.700 10.300.700 16.300" stroke="#111" strokeWidth="1.300" /></Svg>
        <input aria-label="Search Windows" placeholder="Type here to search" className="ml-[11px] w-0 flex-1 bg-transparent text-sm outline-none placeholder:text-[#3a3a3a]" />
        <Flower />
      </label>
      <Btn label="Task view" w="w-[50px]">
        <Svg w={17} h={16}><path d="M1 0v3h10.500V0M1 16v-3h10.500v3M1.500 5.500h9.500v5H1.500z" stroke="#fff" strokeWidth="1.200" /><path d="M15 0v4M15 9v7" stroke="#fff" strokeWidth="1.300" /><path d="M13.500 5h3v3h-3z" fill="#fff" stroke="none" /></Svg>
      </Btn>
      <TaskIcon label="Microsoft 365">
        <svg width="22" height="24" viewBox="0 0 22 24" aria-hidden="true">
          <defs>
            <linearGradient id="mLeft" x1="0" y1="0" x2="0" y2="1"><stop offset="0" stopColor="#9aa0ee" /><stop offset="1" stopColor="#4650b0" /></linearGradient>
            <linearGradient id="mRight" x1="0" y1="0" x2="1" y2="1"><stop offset="0" stopColor="#2c66c8" /><stop offset="1" stopColor="#4fd0f7" /></linearGradient>
            <linearGradient id="mBase" x1="0" y1="1" x2="1" y2="0"><stop offset="0" stopColor="#8a5fc0" /><stop offset="1" stopColor="#d3a6ee" /></linearGradient>
          </defs>
          <path d="M10 1 2.500 5Q1 6 1 8v8q0 1.500 1.500 2.500L7 21q-1.500-3 0-5V9.500Q7 8 8.500 7L12 5q0-3-2-4z" fill="url(#mLeft)" />
          <path d="M10 1q2 2 1.500 5l3.500 2q1 1 1 2v6l4-1q1-1 1-2V7q0-1-1.500-2L12 1q-1-.7-2 0z" fill="url(#mRight)" />
          <path d="M7 15q-2 3 0 6l3 2q1 .5 2.500 0l7-4q1.500-1 1.500-3v-3q-1 3-5 3l-4 2.500q-1 .5-2 0z" fill="url(#mBase)" />
        </svg>
      </TaskIcon>
      <TaskIcon label="File Explorer" open stacked>
        <svg width="22" height="19" viewBox="0 0 22 19" aria-hidden="true">
          <path d="M0 0h9l2 2h11v5H0z" fill="#e8a317" /><path d="M0 3h22v15H0z" fill="#ffd25e" /><path d="M4 18v-6q0-2 2-2h10q2 0 2 2v6h-4v-3H8v3z" fill="#3a8fdb" />
        </svg>
      </TaskIcon>
      <TaskIcon label="Microsoft Edge" open>
        <svg width="24" height="24" viewBox="0 0 24 24" aria-hidden="true">
          <defs><linearGradient id="edge" x1="0" y1=".3" x2="1" y2=".3"><stop offset="0" stopColor="#25a5e5" /><stop offset="1" stopColor="#65d862" /></linearGradient></defs>
          <path d="M0 11v1a12 12 0 0 0 21 7.500c1-1.500 0-2-1-1.500-5 2-9 0-9.500-4L10 8z" fill="#1172c6" />
          <path d="M0 11C1 4 6 0 12 0c7 0 12 5 12 10 0 4-3 6-6 6-3 0-5-1-4-3 2-3-1-6-4-6-5 0-8 2-10 4z" fill="url(#edge)" />
          <path d="M10 8C4 10 3 20 12 24 2 24 0 17 0 11c2-3 6-4 10-3z" fill="#1586d8" />
          <path d="M10 8c-3 2-3.500 5-2 8 2 4 8 5 13 2-1 2.500-4 5-8 6C3 22 3 11 10 8z" fill="#0c56a0" />
        </svg>
      </TaskIcon>
      <TaskIcon label="Mail">
        <svg width="24" height="22" viewBox="0 0 24 22" aria-hidden="true"><path d="M0 7 12 0l12 7v14H0z" fill="#0a63b8" /><path d="M2 6h20L12 15z" fill="#f4f8fb" /><path d="M0 7v15h24z" fill="#1384dc" /><path d="M24 7v15H0z" fill="#41b9f2" /></svg>
      </TaskIcon>
      <TaskIcon label="Microsoft Store">
        <svg width="24" height="24" viewBox="0 0 24 24" aria-hidden="true">
          <path d="M6.500 6V2q0-1 1-1h9q1 0 1 1v4" fill="none" stroke="#2cb1e8" strokeWidth="2.500" /><path d="M1 5h22v16q0 2-2 2H3q-2 0-2-2z" fill="#f3f3f3" />
          <path d="M7.500 9.500h4v4h-4z" fill="#f25022" /><path d="M12.500 9.500h4v4h-4z" fill="#7fba00" /><path d="M7.500 14.500h4v4h-4z" fill="#00a4ef" /><path d="M12.500 14.500h4v4h-4z" fill="#ffb900" />
        </svg>
      </TaskIcon>
      <TaskIcon label="Anaconda" open>
        <svg width="24" height="22" viewBox="0 0 24 22" fill="none" aria-hidden="true">
          <path d="M10 1.900a9.300 9.300 0 1 1-3 17" stroke="#43b02a" strokeWidth="2.600" />
          <path d="M10 1.900a9.300 9.300 0 0 0-3 17" stroke="#43b02a" strokeWidth="2" strokeDasharray="1.500 1.500" />
          <path d="M10 4.500a7 7 0 0 0-3 11.500" stroke="#2f8a1e" strokeWidth="1.500" strokeDasharray="1 2" />
        </svg>
      </TaskIcon>
      <TaskIcon label="Command Prompt" open>
        <svg width="22" height="19" viewBox="0 0 22 19" aria-hidden="true"><path d="M.5.500h21v18H.500z" fill="#000" stroke="#999" /><path d="M1 1h20v2H1z" fill="#c8c8c8" /><path d="M6 5.500H3.500v3H6M8 5.500v1M8 7.500v1M10 5l2 4M14 8.500h5" stroke="#eee" fill="none" /></svg>
      </TaskIcon>
      <TaskIcon label="Symbolic tool" open>
        <svg width="24" height="24" viewBox="0 0 24 24" aria-hidden="true">
          <rect width="24" height="24" rx="3" fill="#fff" />
          <path d="M4 20V5l2-2h12l2 3v5M4 4l5 7-5 8M9 11l5-5h6M9 11l3 6-8 3M14 6l-1-3M14 6v5M9 11h11M9 3 7 8" stroke="#9c2f36" strokeWidth="1.400" fill="none" />
          <path d="M20.500 12q-5-2-6.500 1c0 3 6 2.500 6 5.500 0 3-4 2.500-7 1.500" stroke="#fff" strokeWidth="4" fill="none" />
          <path d="M20.500 12q-5-2-6.500 1c0 3 6 2.500 6 5.500 0 3-4 2.500-7 1.500" stroke="#222" strokeWidth="2" fill="none" />
        </svg>
      </TaskIcon>
      <TaskIcon label="Excel" open><ExcelLogo size={24} /></TaskIcon>
      <div className="ml-auto flex items-center">
        <button type="button" className="flex items-center gap-2 text-sm">
          <svg width="26" height="26" viewBox="0 0 26 26" fill="none" aria-hidden="true">
            <path d="M1 14Q2 6 10 5.500q8 .5 10 7.500-3-1-5 .5-2.500-2-5 0-2-1.500-4 0Q3 12 1 14z" fill="#55aee9" /><path d="M5 13q1-6 5-7.500-2 3 0 8" fill="#8fd0f8" />
            <path d="M10.500 13v9q0 2-2 2t-2-1.500" stroke="#8b939c" strokeWidth="2" />
            <path d="m13 2-1 2M17 1l-1 2.500M21 2l-1 2.500M19 6l-1 2M23 5l-1 2.500M23 10l-1 2" stroke="#3da2ec" strokeWidth="2" />
          </svg>
          <span className="text-[13px]">Rain coming</span>
        </button>
        <Btn label="Hidden icons" w="ml-[19px] w-8"><Svg w={13} h={8}><path d="m1 7 5.500-5.500L12 7" stroke="#fff" strokeWidth="1.300" /></Svg></Btn>
        <Btn label="Meet now" w="w-8"><Svg w={13} h={16}><path d="M1.500 4.500h7v7H1.500zM8.500 7l3-2v6l-3-2M3 2q3.500-2 7 0M3 14q3.500 2 7 0" stroke="#fff" strokeWidth="1.200" /></Svg></Btn>
        <Btn label="Battery" w="w-8"><Svg w={16} h={12}><path d="M5.500 2.500h8v8h-8V8M13.500 5h1.500v3h-1.500" stroke="#fff" /><path d="M7 4h5.500v5H7z" fill="#fff" stroke="none" /><path d="M1.500 0v3M4.500 0v3M.500 3h5v2.500L3 7zM3 7v3.500h2" stroke="#fff" /></Svg></Btn>
        <div className="w-16 whitespace-nowrap text-center text-[11px] leading-[18px]">5:04 PM<br />4/14/2023</div>
        <button type="button" aria-label="1 new notification" className="relative ml-2 mr-[5px] h-10 w-9">
          <svg width="17" height="17" viewBox="0 0 17 17" className="ml-[5px]" aria-hidden="true"><path d="M0 0h16v12H6l-3 4v-4H0z" fill="#fff" /><path d="M3 3.500h10M3 6.500h10M3 9.500h7" stroke="#26353b" /></svg>
          <span className="absolute bottom-1 left-3 flex size-4 items-center justify-center rounded-full border border-[#888] bg-[#333b3f] text-[11px] font-semibold">1</span>
        </button>
        <div className="h-10 w-px bg-[#5e6c73]" />
        <div className="w-1" />
      </div>
    </div>
  );
}

export default function App() {
  return (
    <div className="flex h-screen flex-col overflow-hidden bg-[#efefef] font-['Noto_Sans','Open_Sans',sans-serif] text-[#262626]">
      <TitleBar />
      <TabRow />
      <Ribbon />
      <FormulaBar />
      <Sheet />
      <SheetTabs />
      <StatusBar />
      <Taskbar />
    </div>
  );
}
